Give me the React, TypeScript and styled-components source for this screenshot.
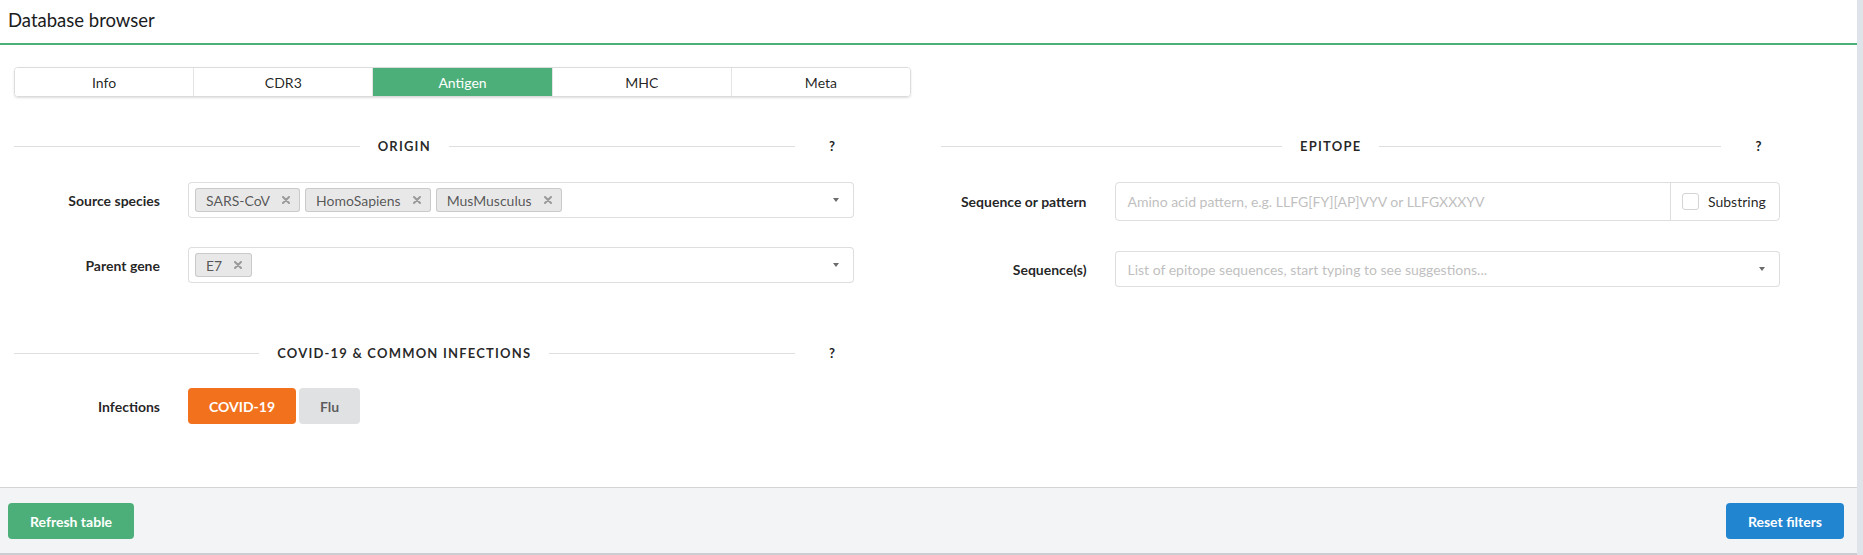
import React from "react";
import styled, { createGlobalStyle } from "styled-components";

const GlobalStyle = createGlobalStyle`
  html, body { margin: 0; padding: 0; }
  body {
    background: #dfe3ea;
    font-family: Lato, "Helvetica Neue", Arial, sans-serif;
    color: rgba(0, 0, 0, 0.87);
    -webkit-font-smoothing: antialiased;
  }
  * { box-sizing: border-box; }
`;

const GREEN = "#4caf79";

const Panel = styled.div`
  width: 1857px;
  height: 555px;
  background: #fff;
  display: flex;
  flex-direction: column;
  border-bottom: 2px solid #cbcdd1;
`;

const Header = styled.header`
  height: 45px;
  flex: none;
  display: flex;
  align-items: center;
  padding: 0 0 3px 8px;
  border-bottom: 2px solid ${GREEN};
  font-size: 18.5px;
  font-weight: 400;
  color: #1b1c1d;
`;

const Content = styled.main`
  flex: 1;
  padding-top: 22px;
`;

const TabBar = styled.nav`
  margin-left: 14px;
  width: 897px;
  height: 30px;
  display: flex;
  border: 1px solid #dcdcdd;
  border-radius: 4px;
  box-shadow: 0 1px 2px rgba(34, 36, 38, 0.15);
  overflow: hidden;
`;

const Tab = styled.div<{ $active?: boolean }>`
  flex: 1;
  display: flex;
  align-items: center;
  justify-content: center;
  font-size: 14px;
  color: ${(p) => (p.$active ? "#fff" : "rgba(0,0,0,.87)")};
  background: ${(p) => (p.$active ? GREEN : "#fff")};
  & + & {
    border-left: 1px solid #e4e4e5;
  }
`;

const Columns = styled.div`
  margin-top: 39px;
  display: grid;
  grid-template-columns: 1fr 1fr;
  column-gap: 71px;
  padding: 0 61px 0 14px;
`;

const Column = styled.section`
  display: flex;
  flex-direction: column;
`;

const DividerRow = styled.div<{ $top?: number }>`
  display: flex;
  align-items: center;
  height: 20px;
  margin-top: ${(p) => p.$top ?? 0}px;
`;

const Divider = styled.div`
  flex: 1;
  display: flex;
  align-items: center;
  gap: 18px;
  &::before,
  &::after {
    content: "";
    flex: 1;
    height: 1px;
    background: #dedede;
  }
`;

const DividerText = styled.span`
  font-size: 13px;
  font-weight: 700;
  letter-spacing: 1.2px;
  text-transform: uppercase;
  color: rgba(0, 0, 0, 0.85);
  white-space: nowrap;
`;

const Help = styled.span`
  width: 75px;
  text-align: center;
  font-size: 13px;
  font-weight: 700;
  color: #1b1c1d;
`;

const Field = styled.div<{ $top: number }>`
  display: flex;
  align-items: center;
  margin-top: ${(p) => p.$top}px;
  margin-right: 16px;
`;

const Label = styled.label`
  width: 146px;
  flex: none;
  margin-right: 28px;
  text-align: right;
  font-size: 14px;
  font-weight: 700;
  color: rgba(0, 0, 0, 0.87);
`;

const Select = styled.div`
  flex: 1;
  height: 36px;
  display: flex;
  align-items: center;
  gap: 5px;
  padding: 0 34px 0 6px;
  border: 1px solid rgba(34, 36, 38, 0.15);
  border-radius: 4px;
  position: relative;
  background: #fff;
`;

const Caret = styled.span`
  position: absolute;
  right: 14px;
  top: 50%;
  margin-top: -2px;
  width: 0;
  height: 0;
  border-left: 3.5px solid transparent;
  border-right: 3.5px solid transparent;
  border-top: 4px solid #6b6b6b;
`;

const Tag = styled.span`
  height: 24px;
  display: inline-flex;
  align-items: center;
  gap: 12px;
  padding: 0 10px 0 11px;
  background: #e8e8e8;
  border-radius: 3px;
  box-shadow: inset 0 0 0 1px rgba(34, 36, 38, 0.15);
  font-size: 14px;
  color: rgba(0, 0, 0, 0.65);
`;

const Placeholder = styled.span`
  font-size: 14px;
  color: #bfbfbf;
  padding-left: 6px;
  white-space: nowrap;
`;

const InputGroup = styled.div`
  flex: 1;
  height: 39px;
  display: flex;
  border: 1px solid rgba(34, 36, 38, 0.15);
  border-radius: 4px;
`;

const TextInput = styled.div`
  flex: 1;
  display: flex;
  align-items: center;
  padding-left: 12px;
  font-size: 14px;
  color: #bfbfbf;
`;

const Addon = styled.label`
  width: 109px;
  flex: none;
  display: flex;
  align-items: center;
  gap: 9px;
  padding-left: 11px;
  border-left: 1px solid rgba(34, 36, 38, 0.15);
  font-size: 14px;
  color: rgba(0, 0, 0, 0.87);
`;

const Check = styled.span`
  width: 17px;
  height: 17px;
  border: 1px solid #d4d4d5;
  border-radius: 3px;
  background: #fff;
`;

const ButtonGroup = styled.div`
  display: flex;
  gap: 3px;
`;

const Button = styled.button<{ $tone: "orange" | "grey" | "green" | "blue" }>`
  height: 36px;
  padding: 0 ${(p) => (p.$tone === "green" || p.$tone === "blue" ? 22 : 21)}px;
  border: none;
  border-radius: 4px;
  font-family: inherit;
  font-size: 14px;
  font-weight: 700;
  cursor: pointer;
  background: ${(p) =>
    ({ orange: "#f2711c", grey: "#e0e1e2", green: GREEN, blue: "#2185d0" })[p.$tone]};
  color: ${(p) => (p.$tone === "grey" ? "rgba(0,0,0,.6)" : "#fff")};
`;

const Footer = styled.footer`
  flex: none;
  display: flex;
  justify-content: space-between;
  padding: 15px 13px 14px 8px;
  border-top: 1px solid #d4d4d5;
  background: #f3f4f5;
`;

const RemoveIcon = () => (
  <svg width="8" height="8" viewBox="0 0 8 8" aria-hidden>
    <path d="M1 1L7 7M7 1L1 7" stroke="#9a9a9a" strokeWidth="2" strokeLinecap="round" />
  </svg>
);

const TagItem = ({ text }: { text: string }) => (
  <Tag>
    {text}
    <RemoveIcon />
  </Tag>
);

export default function App() {
  return (
    <>
      <GlobalStyle />
      <Panel>
        <Header>Database browser</Header>
        <Content>
          <TabBar>
            <Tab>Info</Tab>
            <Tab>CDR3</Tab>
            <Tab $active>Antigen</Tab>
            <Tab>MHC</Tab>
            <Tab>Meta</Tab>
          </TabBar>
          <Columns>
            <Column>
              <DividerRow>
                <Divider>
                  <DividerText>Origin</DividerText>
                </Divider>
                <Help>?</Help>
              </DividerRow>
              <Field $top={26}>
                <Label>Source species</Label>
                <Select>
                  <TagItem text="SARS-CoV" />
                  <TagItem text="HomoSapiens" />
                  <TagItem text="MusMusculus" />
                  <Caret />
                </Select>
              </Field>
              <Field $top={29}>
                <Label>Parent gene</Label>
                <Select>
                  <TagItem text="E7" />
                  <Caret />
                </Select>
              </Field>
              <DividerRow $top={60}>
                <Divider>
                  <DividerText>COVID-19 &amp; common infections</DividerText>
                </Divider>
                <Help>?</Help>
              </DividerRow>
              <Field $top={25}>
                <Label>Infections</Label>
                <ButtonGroup>
                  <Button $tone="orange">COVID-19</Button>
                  <Button $tone="grey">Flu</Button>
                </ButtonGroup>
              </Field>
            </Column>
            <Column>
              <DividerRow>
                <Divider>
                  <DividerText>Epitope</DividerText>
                </Divider>
                <Help>?</Help>
              </DividerRow>
              <Field $top={26}>
                <Label>Sequence or pattern</Label>
                <InputGroup>
                  <TextInput>Amino acid pattern, e.g. LLFG[FY][AP]VYV or LLFGXXXYV</TextInput>
                  <Addon>
                    <Check />
                    Substring
                  </Addon>
                </InputGroup>
              </Field>
              <Field $top={30}>
                <Label>Sequence(s)</Label>
                <Select>
                  <Placeholder>List of epitope sequences, start typing to see suggestions...</Placeholder>
                  <Caret />
                </Select>
              </Field>
            </Column>
          </Columns>
        </Content>
        <Footer>
          <Button $tone="green">Refresh table</Button>
          <Button $tone="blue">Reset filters</Button>
        </Footer>
      </Panel>
    </>
  );
}
